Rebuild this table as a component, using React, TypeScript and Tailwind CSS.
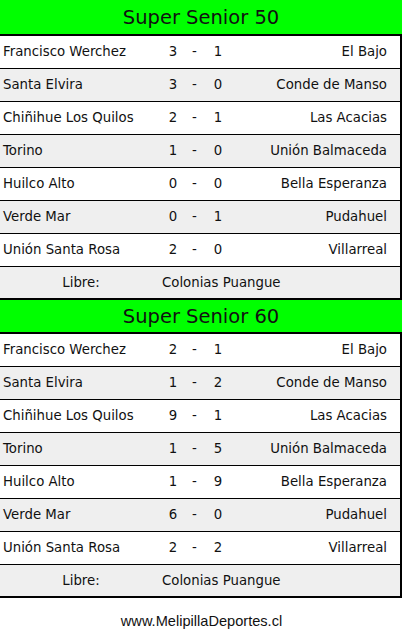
const matches50 = [
  ['Francisco Werchez', '3', '1', 'El Bajo'],
  ['Santa Elvira', '3', '0', 'Conde de Manso'],
  ['Chiñihue Los Quilos', '2', '1', 'Las Acacias'],
  ['Torino', '1', '0', 'Unión Balmaceda'],
  ['Huilco Alto', '0', '0', 'Bella Esperanza'],
  ['Verde Mar', '0', '1', 'Pudahuel'],
  ['Unión Santa Rosa', '2', '0', 'Villarreal'],
]

const matches60 = [
  ['Francisco Werchez', '2', '1', 'El Bajo'],
  ['Santa Elvira', '1', '2', 'Conde de Manso'],
  ['Chiñihue Los Quilos', '9', '1', 'Las Acacias'],
  ['Torino', '1', '5', 'Unión Balmaceda'],
  ['Huilco Alto', '1', '9', 'Bella Esperanza'],
  ['Verde Mar', '6', '0', 'Pudahuel'],
  ['Unión Santa Rosa', '2', '2', 'Villarreal'],
]

function Fixture({ title, rows, free, first }: { title: string; rows: string[][]; free: string; first?: boolean }) {
  return (
    <section className="w-[402px]">
      <div
        className={`flex items-center justify-center bg-[#00ff00] text-[19.5px] text-[#111] ${first ? 'h-[34px] pt-[2px]' : 'h-[32px] pt-[1px]'}`}
      >
        {title}
      </div>
      <div className="border-t-2 border-r-2 border-b-2 border-black">
        {rows.map((r, i) => (
          <div
            key={i}
            className={`flex h-[33px] items-center border-b border-black text-[13.3px] text-[#111] ${i % 2 ? 'bg-[#efefef]' : 'bg-white'}`}
          >
            <span className="w-[162px] pl-[3px]">{r[0]}</span>
            <span className="w-[22px] text-center">{r[1]}</span>
            <span className="w-[21px] text-center">-</span>
            <span className="w-[26px] text-center">{r[2]}</span>
            <span className="flex-1 pr-[13px] text-right">{r[3]}</span>
          </div>
        ))}
        <div className="flex h-[31px] items-center bg-[#efefef] text-[13.3px] text-[#111]">
          <span className="w-[162px] text-center">Libre:</span>
          <span>{free}</span>
        </div>
      </div>
    </section>
  )
}

export default function App() {
  return (
    <div className="h-[644px] w-[403px] bg-white font-['DejaVu_Sans',Verdana,sans-serif]">
      <Fixture title="Super Senior 50" rows={matches50} free="Colonias Puangue" first />
      <Fixture title="Super Senior 60" rows={matches60} free="Colonias Puangue" />
      <p className="pt-[13px] text-center font-['Liberation_Sans',Arial,sans-serif] text-[14.6px] text-[#111]">
        www.MelipillaDeportes.cl
      </p>
    </div>
  )
}
